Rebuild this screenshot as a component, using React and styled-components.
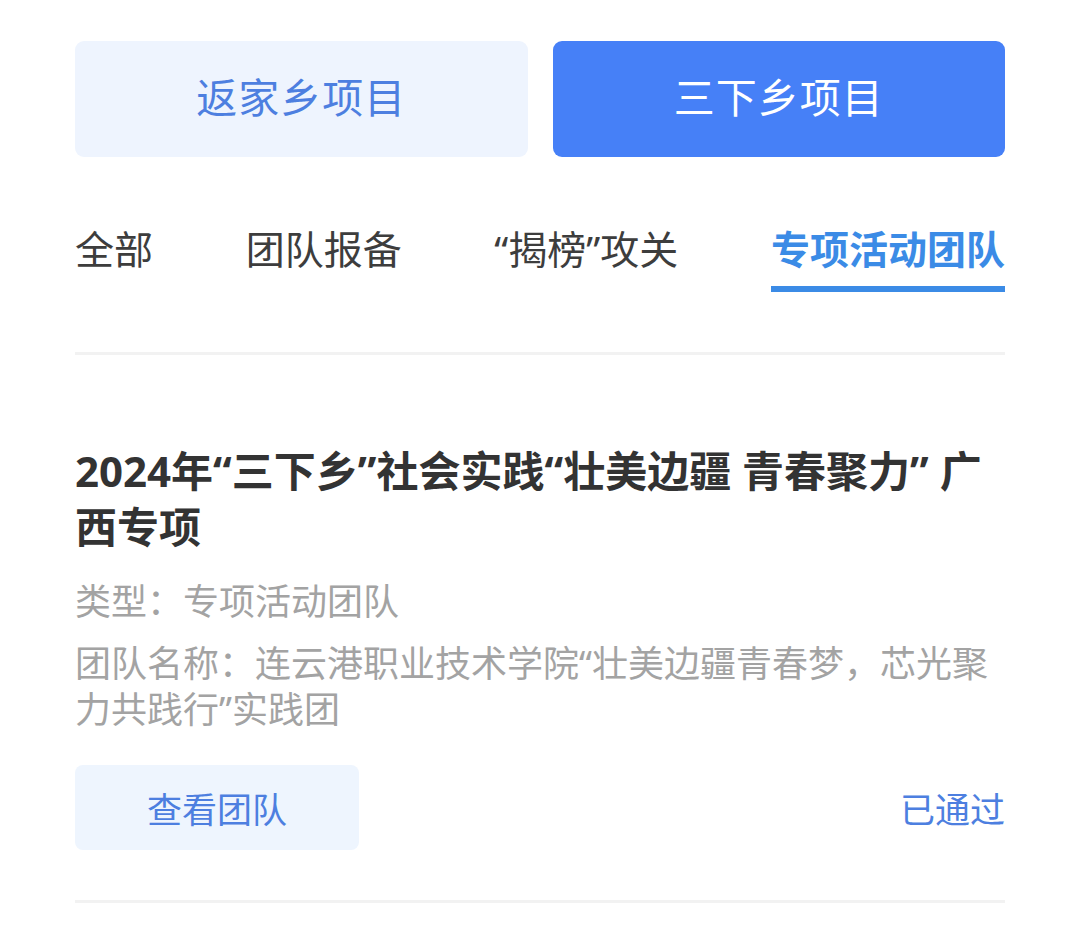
import React from "react";
import styled, { createGlobalStyle } from "styled-components";

const GlobalStyle = createGlobalStyle`
  html, body {
    margin: 0;
    padding: 0;
    background: #ffffff;
  }
  body {
    font-family: "Noto Sans", "Noto Sans CJK SC", sans-serif;
  }
`;

const Page = styled.main`
  width: 1080px;
  box-sizing: border-box;
  padding: 41px 75px 0;
  background: #ffffff;
`;

const SwitchRow = styled.div`
  display: flex;
  gap: 25px;
`;

const SwitchButton = styled.button`
  flex: 1;
  height: 116px;
  padding: 0 0 8px;
  border: none;
  border-radius: 9px;
  font-family: inherit;
  font-size: 41px;
  letter-spacing: 1px;
  background: ${(p) => (p.$active ? "#4680f7" : "#eef4fe")};
  color: ${(p) => (p.$active ? "#ffffff" : "#4d7fe0")};
`;

const Tabs = styled.nav`
  display: flex;
  justify-content: space-between;
  margin-top: 71px;
`;

const Tab = styled.div`
  display: flex;
  flex-direction: column;
  font-size: 39px;
  line-height: 42px;
  color: ${(p) => (p.$active ? "#3b8be6" : "#3d3d3d")};
  font-weight: ${(p) => (p.$active ? 700 : 400)};
  &::after {
    content: "";
    height: 6px;
    margin-top: 16px;
    background: ${(p) => (p.$active ? "#3b8be6" : "transparent")};
  }
`;

const Divider = styled.div`
  height: 3px;
  background: #f2f2f2;
`;

const TopDivider = styled(Divider)`
  margin-top: 60px;
`;

const Card = styled.section`
  padding: 88px 0 50px;
`;

const Title = styled.h2`
  margin: 0;
  font-size: 42px;
  line-height: 56px;
  font-weight: 700;
  color: #333333;
`;

const Info = styled.p`
  margin: ${(p) => (p.$first ? "24px" : "16px")} 0 0;
  font-size: 36px;
  line-height: 46px;
  color: #a3a3a3;
`;

const Footer = styled.div`
  display: flex;
  justify-content: space-between;
  align-items: center;
  margin-top: 32px;
`;

const ViewButton = styled.button`
  width: 284px;
  height: 85px;
  border: none;
  border-radius: 8px;
  background: #eef5fe;
  color: #4d7fe0;
  font-family: inherit;
  font-size: 35px;
`;

const Status = styled.span`
  font-size: 35px;
  color: #4d7fe0;
`;

const tabs = ["全部", "团队报备", "“揭榜”攻关", "专项活动团队"];

export default function App() {
  return (
    <>
      <GlobalStyle />
      <Page>
        <SwitchRow>
          <SwitchButton>返家乡项目</SwitchButton>
          <SwitchButton $active>三下乡项目</SwitchButton>
        </SwitchRow>
        <Tabs>
          {tabs.map((t, i) => (
            <Tab key={t} $active={i === tabs.length - 1}>
              {t}
            </Tab>
          ))}
        </Tabs>
        <TopDivider />
        <Card>
          <Title>2024年“三下乡”社会实践“壮美边疆 青春聚力” 广西专项</Title>
          <Info $first>类型：专项活动团队</Info>
          <Info>团队名称：连云港职业技术学院“壮美边疆青春梦，芯光聚力共践行”实践团</Info>
          <Footer>
            <ViewButton>查看团队</ViewButton>
            <Status>已通过</Status>
          </Footer>
        </Card>
        <Divider />
      </Page>
    </>
  );
}
